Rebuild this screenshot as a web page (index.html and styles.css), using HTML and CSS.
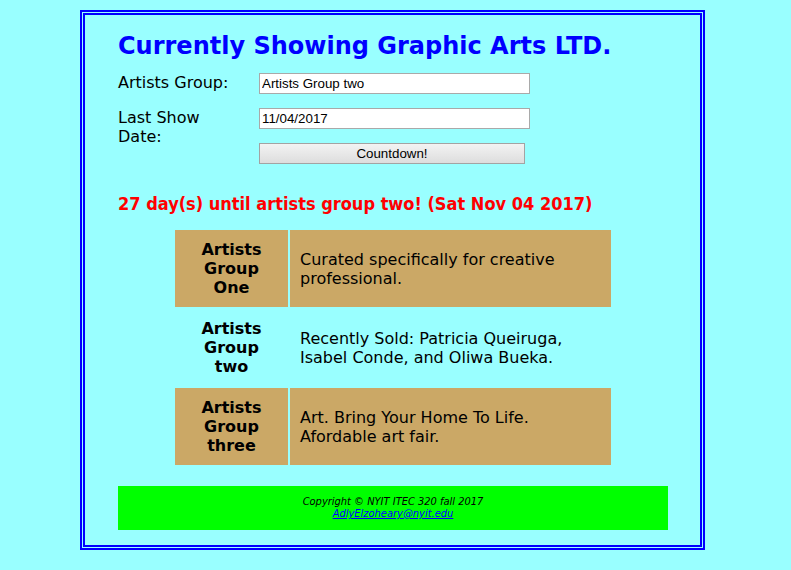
FILE: index.html
```html
<!DOCTYPE html>
<html>
<head>
<meta charset="utf-8">
<title>Currently Showing Graphic Arts LTD.</title>
<link rel="stylesheet" href="styles.css">
</head>
<body>
<div class="frame">
  <h1 class="title">Currently Showing Graphic Arts LTD.</h1>
  <form class="form">
    <label class="lbl">Artists Group:</label>
    <input class="field" type="text" value="Artists Group two">
    <label class="lbl lbl-tall">Last Show Date:</label>
    <input class="field" type="text" value="11/04/2017">
    <button class="btn" type="button">Countdown!</button>
  </form>
  <p class="countdown">27 day(s) until artists group two! (Sat Nov 04 2017)</p>
  <table class="groups">
    <tr class="tan">
      <th>Artists Group One</th>
      <td>Curated specifically for creative professional.</td>
    </tr>
    <tr>
      <th>Artists Group two</th>
      <td>Recently Sold: Patricia Queiruga, Isabel Conde, and Oliwa Bueka.</td>
    </tr>
    <tr class="tan">
      <th>Artists Group three</th>
      <td>Art. Bring Your Home To Life. Afordable art fair.</td>
    </tr>
  </table>
  <footer class="footer">
    <div>Copyright &copy; NYIT ITEC 320 fall 2017</div>
    <a href="#" class="mail">AdlyElzoheary@nyit.edu</a>
  </footer>
</div>
</body>
</html>
```

FILE: styles.css
```css
html, body {
  margin: 0;
  padding: 0;
  background: #99ffff;
}
body {
  font-family: "DejaVu Sans", sans-serif;
  color: #000;
}
.frame {
  width: 550px;
  margin: 10px 0 0 80px;
  padding: 16px 32px 15px 33px;
  border: 5px double #0000ff;
}
.title {
  margin: 0;
  font-size: 24px;
  line-height: 30px;
  font-weight: bold;
  color: #0000ff;
  font-family: "DejaVu Sans", sans-serif;
}
.form {
  margin-top: 12px;
  display: grid;
  grid-template-columns: 141px 271px;
  grid-template-rows: 21px 21px 21px;
  row-gap: 14px;
}
.lbl {
  font-size: 16px;
  line-height: 19px;
  align-self: start;
  width: 115px;
}
.lbl-tall {
  grid-row: 2 / span 2;
}
.field {
  box-sizing: border-box;
  height: 21px;
  width: 271px;
  margin: 0;
  padding: 1px 2px;
  border: 1px solid #a9a9a9;
  background: #fff;
  font-family: "Liberation Sans", Arial, sans-serif;
  font-size: 13.33px;
  color: #000;
}
.btn {
  grid-column: 2;
  box-sizing: border-box;
  height: 21px;
  width: 266px;
  margin: 0;
  padding: 0;
  border: 1px solid #a3a3a3;
  border-radius: 0;
  background: linear-gradient(#f3f3f3, #dddddd);
  font-family: "Liberation Sans", Arial, sans-serif;
  font-size: 13.33px;
  color: #000;
}
.countdown {
  margin: 29px 0 0;
  font-family: "DejaVu Sans Condensed", "DejaVu Sans", sans-serif;
  font-size: 18px;
  line-height: 22px;
  font-weight: bold;
  color: #ff0000;
}
.groups {
  width: 440px;
  margin: 13px auto 0;
  border-spacing: 2px;
  font-size: 16px;
  line-height: 19px;
}
.groups th {
  width: 93px;
  padding: 10px;
  text-align: center;
  font-weight: bold;
}
.groups td {
  padding: 10px;
  text-align: left;
}
.tan th, .tan td {
  background: #cba866;
}
.footer {
  margin-top: 19px;
  background: #00ff00;
  padding: 10px 0;
  text-align: center;
  font-family: "DejaVu Sans Condensed", "DejaVu Sans", sans-serif;
  font-size: 11px;
  line-height: 12px;
  font-style: italic;
}
.mail {
  color: #0000ff;
  text-decoration: underline;
}
```
